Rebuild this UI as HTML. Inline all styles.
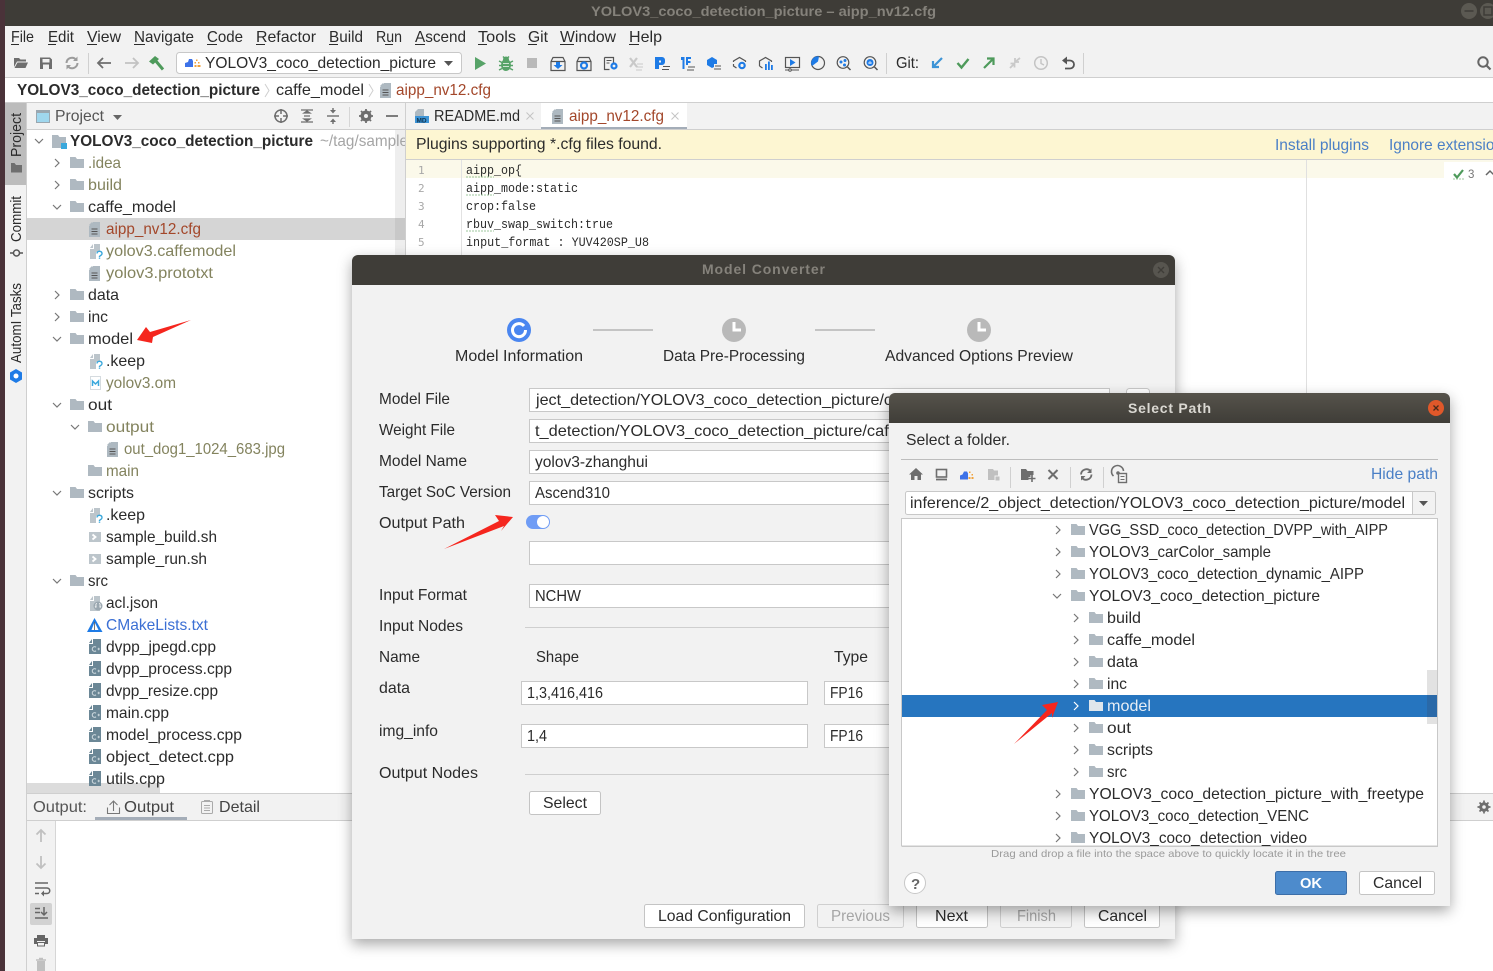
<!DOCTYPE html>
<html><head><meta charset="utf-8"><title>Model Converter</title>
<style>
html,body{margin:0;padding:0;background:#fff;width:1493px;height:971px;overflow:hidden}
svg{display:block;font-family:"Liberation Sans",sans-serif;font-size:16px;fill:#2b2b2b}
.m{font-family:"Liberation Mono",monospace;font-size:13px}
.o{fill:#83835e}.r{fill:#a3472a}.b{font-weight:bold}.g{fill:#a5a5a5}.l{fill:#4a7fc6}
.n{font-family:"DejaVu Sans Mono",monospace;font-size:11px;fill:#a8a8a8}
.ic{fill:none;stroke:#6e6e6e;stroke-width:1.6}
.bl{fill:#1e7be6}
</style></head><body>
<svg width="1493" height="971" viewBox="0 0 1493 971">
<defs>
<symbol id="f" viewBox="0 0 14 11" width="14" height="11"><path d="M0 0h5.500l1.500 2h7v9H0z" fill="#afb9c1"/></symbol>
<symbol id="d" viewBox="0 0 12 15" width="12" height="15"><path d="M4 0h7v15H0V4z" fill="#aeb9c1"/><path d="M3 0v3H0z" fill="#aeb9c1"/><path d="M2.500 7h6M2.500 9.500h6M2.500 12h6" stroke="#555" stroke-width="1"/></symbol>
<symbol id="c" viewBox="0 0 12 15" width="12" height="15"><path d="M4 0h8v15H0V5h4z" fill="#6b8796"/><path d="M3 0v4H0z" fill="#6b8796"/><path d="M7 8.200a2.300 2.300 0 1 0 0 3.600" fill="none" stroke="#d5dfe4" stroke-width="1"/><path d="M8.500 10h2.500M9.700 8.800v2.400" stroke="#d5dfe4" stroke-width=".8"/></symbol>
<symbol id="k" viewBox="0 0 14 15" width="14" height="15"><path d="M5 0h6v15H1V5h4z" fill="#bcc5cb"/><path d="M4 0v4H1z" fill="#bcc5cb"/></symbol>
<symbol id="q" viewBox="0 0 14 15" width="14" height="15"><path d="M5 0h6v15H1V5h4z" fill="#bcc5cb"/><path d="M4 0v4H1z" fill="#bcc5cb"/><path d="M7 8h7v7H7z" fill="#fff"/><path d="M8 9.500a2.500 2.200 0 1 1 3.500 2l-1 1v1" fill="none" stroke="#3aa8dc" stroke-width="1.400"/><circle cx="10.500" cy="15" r=".9" fill="#3aa8dc"/></symbol>
<symbol id="s" viewBox="0 0 12 10" width="12" height="10"><rect width="12" height="10" fill="#bcc5cb"/><path d="M3.500 2.500L6.500 5l-3 2.500" fill="none" stroke="#fff" stroke-width="1.800"/></symbol>
<symbol id="cr" viewBox="0 0 6 10" width="6" height="10"><path d="M1 1l4 4-4 4" fill="none" stroke="#777" stroke-width="1.200"/></symbol>
<symbol id="cd" viewBox="0 0 10 6" width="10" height="6"><path d="M1 1l4 4 4-4" fill="none" stroke="#777" stroke-width="1.200"/></symbol>
<filter id="sh" x="-8%" y="-8%" width="116%" height="116%"><feDropShadow dx="0" dy="5" stdDeviation="7" flood-color="#000" flood-opacity=".35"/></filter>
<linearGradient id="tb" x1="0" y1="0" x2="0" y2="1"><stop offset="0" stop-color="#56534b"/><stop offset="1" stop-color="#3f3d38"/></linearGradient>
</defs>

<!-- window frame -->
<rect width="1493" height="971" fill="#fff"/>
<rect width="5" height="971" fill="#4a3239"/>
<rect x="5" width="1488" height="26" fill="#3e3c37"/>
<text x="591" y="16" font-size="14" textLength="345" lengthAdjust="spacingAndGlyphs" class="b" style="fill:#85827b">YOLOV3_coco_detection_picture – aipp_nv12.cfg</text>
<circle cx="1469" cy="11" r="8" fill="#5b5952"/><path d="M1464.500 11h9" stroke="#3e3c37" stroke-width="1.500"/>
<circle cx="1488" cy="11" r="8" fill="#5b5952"/><rect x="1484" y="7" width="8" height="8" fill="none" stroke="#3e3c37" stroke-width="1.500"/>

<!-- menu -->
<rect x="5" y="26" width="1488" height="52" fill="#f2f2f2"/>
<g>
<text x="11" y="42" textLength="23" lengthAdjust="spacingAndGlyphs">File</text>
<text x="48" y="42" textLength="26" lengthAdjust="spacingAndGlyphs">Edit</text>
<text x="87" y="42" textLength="34" lengthAdjust="spacingAndGlyphs">View</text>
<text x="134" y="42" textLength="60" lengthAdjust="spacingAndGlyphs">Navigate</text>
<text x="207" y="42" textLength="36" lengthAdjust="spacingAndGlyphs">Code</text>
<text x="256" y="42" textLength="60" lengthAdjust="spacingAndGlyphs">Refactor</text>
<text x="329" y="42" textLength="34" lengthAdjust="spacingAndGlyphs">Build</text>
<text x="376" y="42" textLength="26" lengthAdjust="spacingAndGlyphs">Run</text>
<text x="415" y="42" textLength="51" lengthAdjust="spacingAndGlyphs">Ascend</text>
<text x="478" y="42" textLength="38" lengthAdjust="spacingAndGlyphs">Tools</text>
<text x="528" y="42" textLength="20" lengthAdjust="spacingAndGlyphs">Git</text>
<text x="560" y="42" textLength="56" lengthAdjust="spacingAndGlyphs">Window</text>
<text x="629" y="42" textLength="33" lengthAdjust="spacingAndGlyphs">Help</text>
</g>
<path d="M11 44.500h8M48 44.500h8M87 44.500h10M134 44.500h11M207 44.500h10M256 44.500h9M329 44.500h9M385 44.500h8M415 44.500h10M478 44.500h9M528 44.500h9M560 44.500h14M629 44.500h10" stroke="#2b2b2b" stroke-width="1"/>

<!-- toolbar -->
<path d="M14 58h5l1.500 1.500H26v2h-9l-3 5.500zM17.500 62.500H28l-2.500 5.500H14.500z" fill="#6e6e6e"/>
<path d="M40 57.500h10l2 2V69H40z" fill="#6e6e6e"/><rect x="42.500" y="59" width="7" height="3.500" fill="#f2f2f2"/><rect x="43" y="64.500" width="6" height="4.500" fill="#f2f2f2"/>
<path d="M66.500 63a5.500 5.500 0 0 1 9.500-3.500M77.500 63a5.500 5.500 0 0 1-9.500 3.500" fill="none" stroke="#9c9c9c" stroke-width="2"/><path d="M77.500 56.500v4.500H73zM66.500 69.500V65H71z" fill="#9c9c9c"/>
<path d="M88.500 53v21" stroke="#d0d0d0"/>
<path d="M98 63h13M103 58l-5 5 5 5" class="ic" style="stroke-width:1.800"/>
<path d="M125 63h13M133 58l5 5-5 5" class="ic" style="stroke:#c2c2c2;stroke-width:1.800"/>
<path d="M155 60l8 9.500" stroke="#4e9a5b" stroke-width="3"/><path d="M149 61.500l6-5.500 4 3-6 5.500z" fill="#4e9a5b"/>
<rect x="176.500" y="52.500" width="285" height="21" rx="3" fill="#fff" stroke="#c8c8c8"/>
<path d="M185 67v-4l3-1 1-3h3l1 2v6z" fill="#3d72e8"/><path d="M196 59.500h1.500V61H196zM194.500 62h1.500v1.500h-1.500zM198 62h1.500v1.500H198zM194.500 65h2v2h-2zM197.500 65h3v2h-3z" fill="#f0a23c"/>
<text x="205" y="68" textLength="231" lengthAdjust="spacingAndGlyphs">YOLOV3_coco_detection_picture</text>
<path d="M444 61h9l-4.500 5z" fill="#555"/>
<path d="M475 57l11 6.500-11 6.500z" fill="#57a368"/>
<ellipse cx="506" cy="65" rx="5" ry="6" fill="#57a368"/><circle cx="506" cy="59.500" r="3" fill="#57a368"/><path d="M499 61l3 1.500M513 61l-3 1.500M499 65.500h3M513 65.500h-3M499 70l3-1.500M513 70l-3-1.500M503 56.500l1.500 1.500M509 56.500l-1.500 1.500" stroke="#57a368" stroke-width="1.500"/><path d="M503 63.500h6M503 66.500h6" stroke="#cfe3d3" stroke-width="1"/>
<rect x="527" y="58" width="10" height="10" fill="#b9b9b9"/>
<path d="M553 57.500h10l2 4v9h-14v-9zM551 61.500h14" fill="none" stroke="#555" stroke-width="1.200"/><path d="M556 62h4v3h2.500l-4.500 4-4.500-4H556z" class="bl"/>
<path d="M579 57.500h10l2 4v9h-14v-9zM577 61.500h14" fill="none" stroke="#555" stroke-width="1.200"/><circle cx="584" cy="65.500" r="3" fill="none" stroke="#1e7be6" stroke-width="2.200"/>
<path d="M604.500 57.500h9v6M604.500 57.500v12h5" fill="none" stroke="#555" stroke-width="1.200"/><path d="M606.500 60.500h5M606.500 63h3" stroke="#555"/><circle cx="614" cy="66" r="2.500" fill="none" stroke="#1e7be6" stroke-width="2.200"/>
<path d="M630 58l7 9M637 58l-7 9" stroke="#c9c9c9" stroke-width="2.200"/><path d="M637 64h6M636 67h7M636 70h6" stroke="#c9c9c9"/>
<path d="M655 57h7a3 3 0 0 1 3 3v2a3 3 0 0 1-3 3h-3v4h-4z" class="bl"/><path d="M661 60.500h-2v2h2z" fill="#f2f2f2"/><path d="M663 66.500h7M662 69.500h7" stroke="#555" stroke-width="1.100"/>
<path d="M681 57h3.500v12h-2v-9h-1.500zM686 57h5v2h-3v2h2.500v2H688v2h-2z" class="bl"/><path d="M688 67h7M687 70h7" stroke="#555" stroke-width="1.100"/>
<path d="M707 60l5-3 5 3v4h-3v3l-2 1-5-3z" class="bl"/><path d="M715 66h6M714 69h7" stroke="#555" stroke-width="1.100"/>
<path d="M733.500 62v-1l6-3.500 6 3.500v1M733.500 64v2l3 2" fill="none" stroke="#555" stroke-width="1.200"/><circle cx="742" cy="65.500" r="2.700" fill="none" stroke="#1e7be6" stroke-width="2.200"/>
<path d="M759.500 66v-5l6-3.500 6 3.500v1M759.500 66l3 2" fill="none" stroke="#555" stroke-width="1.200"/><path d="M765 64h1.800v6H765zM768 61.500h1.800V70H768zM771 65h1.800v5H771z" class="bl"/>
<rect x="785.500" y="57.500" width="14" height="10" fill="none" stroke="#555" stroke-width="1.200"/><path d="M790 59l5.500 3.500-5.500 3.500z" class="bl"/><path d="M785 70h14" stroke="#555"/><circle cx="790" cy="70" r="1.300" fill="#f2f2f2" stroke="#555"/>
<circle cx="818" cy="63" r="6.500" fill="none" stroke="#555" stroke-width="1.200"/><path d="M812 66a6.500 6.500 0 0 1 7-9.500l-1 5z" class="bl"/>
<circle cx="843" cy="62.500" r="5.800" fill="none" stroke="#555" stroke-width="1.200"/><path d="M847.500 67l3 3" stroke="#555" stroke-width="1.500"/><circle cx="841" cy="62" r="1.500" class="bl"/><circle cx="845" cy="60.500" r="1.500" class="bl"/><circle cx="844.500" cy="65" r="1.500" class="bl"/>
<circle cx="870" cy="62.500" r="5.800" fill="none" stroke="#555" stroke-width="1.200"/><path d="M874.500 67l3 3" stroke="#555" stroke-width="1.500"/><circle cx="870" cy="62.500" r="3.500" class="bl"/><path d="M868 63h4M870 61v3" stroke="#fff" stroke-width=".7"/>
<path d="M886.500 53v21" stroke="#d0d0d0"/>
<text x="896" y="68" textLength="23" lengthAdjust="spacingAndGlyphs">Git:</text>
<path d="M942 58l-9 9M933 61v6h6" fill="none" stroke="#3d94d6" stroke-width="2.200"/>
<path d="M957.500 63l4 4.500 7-8.500" fill="none" stroke="#4e9a5b" stroke-width="2.400"/>
<path d="M984 68l9-9M987 58.500h6.500v6.500" fill="none" stroke="#4e9a5b" stroke-width="2.200"/>
<path d="M1010 68l4-4M1015 62l5-4M1010.500 63.500h4v4M1015 58v4h4" fill="none" stroke="#c9c9c9" stroke-width="1.800"/>
<circle cx="1041" cy="63" r="6.300" fill="none" stroke="#c4c4c4" stroke-width="1.500"/><path d="M1041 59v4.500l3 1.500" fill="none" stroke="#c4c4c4" stroke-width="1.400"/>
<path d="M1064 60.500h6a4 4 0 0 1 0 8h-5" fill="none" stroke="#555" stroke-width="1.800"/><path d="M1067 56.500v8l-5-4z" fill="#555"/>
<path d="M1083.500 53v21" stroke="#d0d0d0"/>
<circle cx="1483" cy="62" r="4.700" fill="none" stroke="#666" stroke-width="2"/><path d="M1486.500 65.500l4 4" stroke="#666" stroke-width="2.200"/>
<path d="M5 77.500h1488" stroke="#cfcfcf"/>

<!-- breadcrumb -->
<text x="17" y="95" textLength="243" lengthAdjust="spacingAndGlyphs" class="b">YOLOV3_coco_detection_picture</text>
<path d="M265 84l4 6.500-4 6.500" fill="none" stroke="#cfcfcf"/>
<text x="276" y="95" textLength="88" lengthAdjust="spacingAndGlyphs">caffe_model</text>
<path d="M369 84l4 6.500-4 6.500" fill="none" stroke="#cfcfcf"/>
<use href="#d" x="380" y="83"/>
<text x="396" y="95" textLength="95" lengthAdjust="spacingAndGlyphs" class="r">aipp_nv12.cfg</text>
<path d="M5 102.500h1488" stroke="#cfcfcf"/>

<!-- left strip -->
<rect x="5" y="103" width="21" height="868" fill="#f2f2f2"/>
<rect x="5" y="103" width="21" height="82" fill="#bcbcbc"/>
<path d="M26.500 103v868" stroke="#cfcfcf"/>
<text transform="translate(21,157) rotate(-90)" font-size="15" textLength="44" lengthAdjust="spacingAndGlyphs">Project</text>
<path d="M11 163v9.500h11V165h-6l-1.500-2z" fill="#6e6e6e"/>
<text transform="translate(21,242) rotate(-90)" font-size="15" textLength="46" lengthAdjust="spacingAndGlyphs">Commit</text>
<circle cx="16.500" cy="253" r="3" fill="none" stroke="#555" stroke-width="1.500"/><path d="M10 253h3M20 253h3" stroke="#555" stroke-width="1.500"/>
<text transform="translate(21,363) rotate(-90)" font-size="15" textLength="80" lengthAdjust="spacingAndGlyphs">AutomI Tasks</text>
<path d="M16 369l6 3.500v7l-6 3.500-6-3.500v-7z" fill="#1e7be6"/><circle cx="16" cy="376" r="2.500" fill="#fff"/>

<!-- project header -->
<rect x="27" y="103" width="378" height="26" fill="#f2f2f2"/>
<rect x="36.500" y="110.500" width="13" height="12" fill="#9fd7ee" stroke="#9aa7b0"/><path d="M36 111h14v2H36z" fill="#9aa7b0"/>
<text x="55" y="121" textLength="49" lengthAdjust="spacingAndGlyphs" style="fill:#555">Project</text>
<path d="M113 115h9l-4.500 5z" fill="#666"/>
<circle cx="281" cy="116" r="6" fill="none" stroke="#6e6e6e" stroke-width="1.500"/><path d="M281 109v5M281 118v5M274 116h5M283 116h5" stroke="#6e6e6e" stroke-width="1.500"/>
<path d="M301 110h12M301 122h12M304 116h6M304 113l3-2 3 2zM304 119l3 2 3-2z" fill="#6e6e6e" stroke="#6e6e6e" stroke-width="1.200"/>
<path d="M327 116h12" stroke="#6e6e6e" stroke-width="1.400"/><path d="M330 110h6l-3 3.500zM330 122h6l-3-3.500z" fill="#6e6e6e"/><path d="M333 108v3M333 124v-3" stroke="#6e6e6e" stroke-width="1.400"/>
<path d="M349.500 107v20" stroke="#d6d6d6"/>
<circle cx="366" cy="116" r="4" fill="none" stroke="#6e6e6e" stroke-width="3"/><path d="M366 109v14M359 116h14M361 111l10 10M371 111l-10 10" stroke="#6e6e6e" stroke-width="1.800"/><circle cx="366" cy="116" r="2" fill="#f2f2f2"/>
<path d="M386 116h12" stroke="#6e6e6e" stroke-width="1.800"/>
<path d="M27 129.500h378" stroke="#cfcfcf"/>
<path d="M405.500 103v690" stroke="#cfcfcf"/>

<!-- tree -->
<rect x="395" y="130" width="10" height="663" fill="#eeeeee"/>
<rect x="27" y="783" width="133" height="10" fill="#dcdcdc"/>
<rect x="27" y="218" width="368" height="22" fill="#d5d5d5"/><rect x="395" y="218" width="10" height="22" fill="#c8c8c8"/>
<use href="#cd" x="34" y="138"/>
<path d="M52 135h6l1.500 2H66v11H52z" fill="#afb9c1"/><rect x="61" y="143" width="6" height="6" fill="#3aa8dc"/>
<text x="70" y="146" textLength="243" lengthAdjust="spacingAndGlyphs" class="b">YOLOV3_coco_detection_picture</text>
<text x="320" y="146" textLength="88" lengthAdjust="spacingAndGlyphs" class="g">~/tag/sample</text>
<rect x="405" y="130" width="1" height="24" fill="#cfcfcf"/>

<use href="#cr" x="54" y="158"/><use href="#f" x="70" y="157"/><text x="88" y="168" textLength="33" lengthAdjust="spacingAndGlyphs" class="o">.idea</text>
<use href="#cr" x="54" y="180"/><use href="#f" x="70" y="179"/><text x="88" y="190" textLength="34" lengthAdjust="spacingAndGlyphs" class="o">build</text>
<use href="#cd" x="52" y="204"/><use href="#f" x="70" y="201"/><text x="88" y="212" textLength="88" lengthAdjust="spacingAndGlyphs">caffe_model</text>
<use href="#d" x="89" y="222"/><text x="106" y="234" textLength="95" lengthAdjust="spacingAndGlyphs" class="r">aipp_nv12.cfg</text>
<use href="#q" x="89" y="244"/><text x="106" y="256" textLength="130" lengthAdjust="spacingAndGlyphs" class="o">yolov3.caffemodel</text>
<use href="#d" x="89" y="266"/><text x="106" y="278" textLength="107" lengthAdjust="spacingAndGlyphs" class="o">yolov3.prototxt</text>
<use href="#cr" x="54" y="290"/><use href="#f" x="70" y="289"/><text x="88" y="300" textLength="31" lengthAdjust="spacingAndGlyphs">data</text>
<use href="#cr" x="54" y="312"/><use href="#f" x="70" y="311"/><text x="88" y="322" textLength="20" lengthAdjust="spacingAndGlyphs">inc</text>
<use href="#cd" x="52" y="336"/><use href="#f" x="70" y="333"/><text x="88" y="344" textLength="45" lengthAdjust="spacingAndGlyphs">model</text>
<use href="#q" x="89" y="354"/><text x="106" y="366" textLength="39" lengthAdjust="spacingAndGlyphs">.keep</text>
<rect x="90.500" y="376.500" width="10" height="13" fill="#fff" stroke="#d5dbdf"/><path d="M92.500 386v-5l3 3 3-3v5" fill="none" stroke="#3aa8dc" stroke-width="1.500"/><text x="106" y="388" textLength="70" lengthAdjust="spacingAndGlyphs" class="o">yolov3.om</text>
<use href="#cd" x="52" y="402"/><use href="#f" x="70" y="399"/><text x="88" y="410" textLength="24" lengthAdjust="spacingAndGlyphs">out</text>
<use href="#cd" x="70" y="424"/><use href="#f" x="88" y="421"/><text x="106" y="432" textLength="48" lengthAdjust="spacingAndGlyphs" class="o">output</text>
<use href="#d" x="107" y="442"/><text x="124" y="454" textLength="161" lengthAdjust="spacingAndGlyphs" class="o">out_dog1_1024_683.jpg</text>
<use href="#f" x="88" y="465"/><text x="106" y="476" textLength="33" lengthAdjust="spacingAndGlyphs" class="o">main</text>
<use href="#cd" x="52" y="490"/><use href="#f" x="70" y="487"/><text x="88" y="498" textLength="46" lengthAdjust="spacingAndGlyphs">scripts</text>
<use href="#q" x="89" y="508"/><text x="106" y="520" textLength="39" lengthAdjust="spacingAndGlyphs">.keep</text>
<use href="#s" x="89" y="532"/><text x="106" y="542" textLength="111" lengthAdjust="spacingAndGlyphs">sample_build.sh</text>
<use href="#s" x="89" y="554"/><text x="106" y="564" textLength="101" lengthAdjust="spacingAndGlyphs">sample_run.sh</text>
<use href="#cd" x="52" y="578"/><use href="#f" x="70" y="575"/><text x="88" y="586" textLength="20" lengthAdjust="spacingAndGlyphs">src</text>
<use href="#k" x="89" y="596"/><circle cx="98" cy="606" r="4.500" fill="#9aa7b0"/><path d="M97 603.500q-1.500 0-1 2.500t-1 .5M99 603.500q1.500 0 1 2.500t1 .5" fill="none" stroke="#fff" stroke-width=".8"/><text x="106" y="608" textLength="52" lengthAdjust="spacingAndGlyphs">acl.json</text>
<path d="M94.500 618l8 14H87z" fill="#1e7be6"/><path d="M94.500 622l4 8h-7z" fill="#fff"/><path d="M94.500 622v8" stroke="#555" stroke-width=".8"/><text x="106" y="630" textLength="102" lengthAdjust="spacingAndGlyphs" style="fill:#3b6fd4">CMakeLists.txt</text>
<use href="#c" x="89" y="639"/><text x="106" y="652" textLength="110" lengthAdjust="spacingAndGlyphs">dvpp_jpegd.cpp</text>
<use href="#c" x="89" y="661"/><text x="106" y="674" textLength="126" lengthAdjust="spacingAndGlyphs">dvpp_process.cpp</text>
<use href="#c" x="89" y="683"/><text x="106" y="696" textLength="112" lengthAdjust="spacingAndGlyphs">dvpp_resize.cpp</text>
<use href="#c" x="89" y="705"/><text x="106" y="718" textLength="63" lengthAdjust="spacingAndGlyphs">main.cpp</text>
<use href="#c" x="89" y="727"/><text x="106" y="740" textLength="136" lengthAdjust="spacingAndGlyphs">model_process.cpp</text>
<use href="#c" x="89" y="749"/><text x="106" y="762" textLength="128" lengthAdjust="spacingAndGlyphs">object_detect.cpp</text>
<use href="#c" x="89" y="771"/><text x="106" y="784" textLength="59" lengthAdjust="spacingAndGlyphs">utils.cpp</text>

<!-- editor tabs -->
<rect x="406" y="103" width="1087" height="26" fill="#f2f2f2"/>
<path d="M418 109h6v7h-9v-4z" fill="#aeb9c1"/><rect x="415" y="116" width="14" height="7" fill="#3d94d6"/><text x="416.500" y="122.500" font-size="6.500" class="b" style="fill:#12354f">MD</text>
<text x="434" y="121" textLength="86" lengthAdjust="spacingAndGlyphs">README.md</text>
<path d="M526.500 112.500l7 7M533.500 112.500l-7 7" stroke="#c4c4c4"/>
<rect x="541" y="103" width="146" height="24" fill="#fff"/><rect x="541" y="127" width="146" height="2" fill="#a4adb8"/>
<use href="#d" x="552" y="109"/>
<text x="569" y="121" textLength="95" lengthAdjust="spacingAndGlyphs" class="r">aipp_nv12.cfg</text>
<path d="M671.500 112.500l7 7M678.500 112.500l-7 7" stroke="#c4c4c4"/>
<path d="M406 129.500h1087" stroke="#cfcfcf"/>
<rect x="406" y="130" width="1087" height="29" fill="#fdf6d2"/>
<text x="416" y="149" textLength="246" lengthAdjust="spacingAndGlyphs">Plugins supporting *.cfg files found.</text>
<text x="1275" y="150" textLength="94" lengthAdjust="spacingAndGlyphs" class="l">Install plugins</text>
<text x="1389" y="150" textLength="114" lengthAdjust="spacingAndGlyphs" class="l">Ignore extension</text>
<path d="M406 159.500h1087" stroke="#cfcfcf"/>

<!-- editor -->
<rect x="406" y="160" width="1087" height="18" fill="#fbf9ea"/>
<rect x="1444" y="162" width="49" height="16" fill="#fff"/>
<path d="M461.500 160v95" stroke="#e2e2e2"/>
<path d="M1306.500 160v233" stroke="#e0e0e0"/>
<text x="418" y="174" class="n">1</text><text x="418" y="192" class="n">2</text><text x="418" y="210" class="n">3</text><text x="418" y="228" class="n">4</text><text x="418" y="246" class="n">5</text>
<text x="466" y="174" class="m" textLength="56" lengthAdjust="spacingAndGlyphs">aipp_op{</text>
<text x="466" y="192" class="m" textLength="112" lengthAdjust="spacingAndGlyphs">aipp_mode:static</text>
<text x="466" y="210" class="m" textLength="70" lengthAdjust="spacingAndGlyphs">crop:false</text>
<text x="466" y="228" class="m" textLength="147" lengthAdjust="spacingAndGlyphs">rbuv_swap_switch:true</text>
<text x="466" y="246" class="m" textLength="183" lengthAdjust="spacingAndGlyphs">input_format : YUV420SP_U8</text>
<path d="M466 177h28M466 195h28M466 231h28" stroke="#9cc79c" stroke-width="1" stroke-dasharray="2 1"/>
<path d="M1454 174l3 3.500 6-7.500" fill="none" stroke="#4e9a5b" stroke-width="2.200"/><path d="M1453 179h11" stroke="#9cc79c" stroke-dasharray="2 1"/>
<text x="1468" y="178" font-size="11.500" style="fill:#777">3</text>
<path d="M1486 175l4-4 4 4" fill="none" stroke="#666" stroke-width="1.500"/>

<!-- bottom panel -->
<rect x="27" y="793" width="1466" height="178" fill="#fff"/>
<rect x="27" y="794" width="1466" height="26" fill="#f2f2f2"/>
<path d="M27 793.500h1466M27 820.500h1466" stroke="#cfcfcf"/>
<text x="33" y="812" textLength="54" lengthAdjust="spacingAndGlyphs" style="fill:#555">Output:</text>
<path d="M107.500 807.500v6h12v-6M113.500 811v-10M109.500 805l4-4 4 4" fill="none" stroke="#777" stroke-width="1.100"/>
<text x="124" y="812" textLength="50" lengthAdjust="spacingAndGlyphs" style="fill:#444">Output</text>
<rect x="95" y="817" width="92" height="3" fill="#a4adb8"/>
<rect x="201.500" y="801.500" width="11" height="12" rx="1" fill="none" stroke="#aaa"/><path d="M204 800.500h6M204 805.500h6M204 808h6M204 810.500h6" stroke="#aaa"/>
<text x="219" y="812" textLength="41" lengthAdjust="spacingAndGlyphs" style="fill:#444">Detail</text>
<rect x="27" y="821" width="28" height="150" fill="#f2f2f2"/><path d="M55.500 821v150" stroke="#d6d6d6"/>
<path d="M41 842v-12M36.500 834.500l4.500-4.500 4.500 4.500" fill="none" stroke="#c0c0c0" stroke-width="1.800"/>
<path d="M41 856v12M36.500 863.500l4.500 4.500 4.500-4.500" fill="none" stroke="#c0c0c0" stroke-width="1.800"/>
<path d="M35 883h13M35 888h12a2.500 2.500 0 0 1 0 5.500h-4M35 893.500h4" fill="none" stroke="#666" stroke-width="1.500"/><path d="M44 890.500v6l-3-3z" fill="#666"/>
<rect x="30" y="903" width="22" height="22" rx="2" fill="#d2d2d2"/>
<path d="M35 908.500h5M35 912.500h5M35 918h13M44 907v8M41 912l3 3 3-3" fill="none" stroke="#666" stroke-width="1.500"/>
<path d="M37 935h8v3h-8zM34 938h14v6h-3v-3h-8v3h-3z" fill="#666"/><rect x="37.500" y="942.500" width="7" height="3.500" fill="none" stroke="#666"/>
<path d="M36 960h10M39 958.500h4" stroke="#c0c0c0" stroke-width="1.500"/><rect x="37" y="961" width="8" height="10" fill="#c0c0c0"/>
<circle cx="1484" cy="807" r="3.500" fill="none" stroke="#6e6e6e" stroke-width="2.600"/><path d="M1484 800.500v13M1477.500 807h13M1479.500 802.500l9 9M1488.500 802.500l-9 9" stroke="#6e6e6e" stroke-width="1.700"/><circle cx="1484" cy="807" r="1.800" fill="#f2f2f2"/>

<!-- Model Converter dialog -->
<g filter="url(#sh)"><path d="M358 255h811a6 6 0 0 1 6 6v678H352V261a6 6 0 0 1 6-6z" fill="#f2f2f2"/></g>
<path d="M358 255h811a6 6 0 0 1 6 6v24H352v-24a6 6 0 0 1 6-6z" fill="#3f3d38"/>
<text x="702" y="274" font-size="14" textLength="123" lengthAdjust="spacing" class="b" style="fill:#85827b">Model Converter</text>
<circle cx="1161" cy="270" r="8" fill="#57554f"/><path d="M1158 267l6 6M1164 267l-6 6" stroke="#3f3d38" stroke-width="1.400"/>

<circle cx="519" cy="330" r="12" fill="#4a86f0"/><path d="M524 326a6.500 6.500 0 1 0 1.500 4" fill="none" stroke="#fff" stroke-width="3"/>
<text x="455" y="361" textLength="128" lengthAdjust="spacingAndGlyphs">Model Information</text>
<path d="M593 330h60M815 330h60" stroke="#c4c4c4" stroke-width="2"/>
<circle cx="734" cy="330" r="12" fill="#b9b9b9"/><path d="M734 322v8h7" fill="none" stroke="#fff" stroke-width="3"/>
<text x="663" y="361" textLength="142" lengthAdjust="spacingAndGlyphs">Data Pre-Processing</text>
<circle cx="979" cy="330" r="12" fill="#b9b9b9"/><path d="M979 322v8h7" fill="none" stroke="#fff" stroke-width="3"/>
<text x="885" y="361" textLength="188" lengthAdjust="spacingAndGlyphs">Advanced Options  Preview</text>

<text x="379" y="404" textLength="71" lengthAdjust="spacingAndGlyphs">Model File</text>
<text x="379" y="435" textLength="76" lengthAdjust="spacingAndGlyphs">Weight File</text>
<text x="379" y="466" textLength="88" lengthAdjust="spacingAndGlyphs">Model Name</text>
<text x="379" y="497" textLength="132" lengthAdjust="spacingAndGlyphs">Target SoC Version</text>
<text x="379" y="528" textLength="86" lengthAdjust="spacingAndGlyphs">Output Path</text>
<g fill="#fff" stroke="#c8c8c8">
<rect x="529.500" y="388.500" width="580" height="23"/>
<rect x="529.500" y="419.500" width="580" height="23"/>
<rect x="529.500" y="450.500" width="580" height="23"/>
<rect x="529.500" y="481.500" width="580" height="23"/>
<rect x="529.500" y="541.500" width="580" height="23"/>
<rect x="529.500" y="584.500" width="580" height="23"/>
<rect x="521.500" y="681.500" width="286" height="23"/>
<rect x="521.500" y="724.500" width="286" height="23"/>
<rect x="824.500" y="681.500" width="100" height="23"/>
<rect x="824.500" y="724.500" width="100" height="23"/>
<rect x="1126.500" y="388.500" width="23" height="23" rx="3"/>
</g>
<text x="536" y="405" textLength="356" lengthAdjust="spacingAndGlyphs">ject_detection/YOLOV3_coco_detection_picture/c</text>
<text x="535" y="436" textLength="358" lengthAdjust="spacingAndGlyphs">t_detection/YOLOV3_coco_detection_picture/caff</text>
<text x="535" y="467" textLength="113" lengthAdjust="spacingAndGlyphs">yolov3-zhanghui</text>
<text x="535" y="498" textLength="75" lengthAdjust="spacingAndGlyphs">Ascend310</text>
<rect x="526" y="515" width="24" height="14" rx="7" fill="#6f9cf5"/><circle cx="543" cy="522" r="6" fill="#fff"/>
<text x="379" y="600" textLength="88" lengthAdjust="spacingAndGlyphs">Input Format</text>
<text x="535" y="601" textLength="46" lengthAdjust="spacingAndGlyphs">NCHW</text>
<text x="379" y="631" textLength="84" lengthAdjust="spacingAndGlyphs">Input Nodes</text>
<path d="M525 627.500h400" stroke="#cfcfcf"/>
<text x="379" y="662" textLength="41" lengthAdjust="spacingAndGlyphs">Name</text>
<text x="536" y="662" textLength="43" lengthAdjust="spacingAndGlyphs">Shape</text>
<text x="834" y="662" textLength="34" lengthAdjust="spacingAndGlyphs">Type</text>
<text x="379" y="693" textLength="31" lengthAdjust="spacingAndGlyphs">data</text>
<text x="527" y="698" textLength="76" lengthAdjust="spacingAndGlyphs">1,3,416,416</text>
<text x="830" y="698" textLength="33" lengthAdjust="spacingAndGlyphs">FP16</text>
<text x="379" y="736" textLength="59" lengthAdjust="spacingAndGlyphs">img_info</text>
<text x="527" y="741" textLength="20" lengthAdjust="spacingAndGlyphs">1,4</text>
<text x="830" y="741" textLength="33" lengthAdjust="spacingAndGlyphs">FP16</text>
<text x="379" y="778" textLength="99" lengthAdjust="spacingAndGlyphs">Output Nodes</text>
<path d="M525 774.500h400" stroke="#cfcfcf"/>
<rect x="529.500" y="791.500" width="71" height="23" rx="2" fill="#fff" stroke="#c4c4c4"/>
<text x="543" y="808" textLength="44" lengthAdjust="spacingAndGlyphs">Select</text>
<rect x="644.500" y="904.500" width="160" height="23" rx="2" fill="#fff" stroke="#c4c4c4"/>
<text x="658" y="921" textLength="133" lengthAdjust="spacingAndGlyphs">Load Configuration</text>
<rect x="817.500" y="904.500" width="86" height="23" rx="2" fill="#f2f2f2" stroke="#cfcfcf"/>
<text x="831" y="921" textLength="59" lengthAdjust="spacingAndGlyphs" class="g">Previous</text>
<rect x="916.500" y="904.500" width="71" height="23" rx="2" fill="#fff" stroke="#c4c4c4"/>
<text x="935" y="921" textLength="33" lengthAdjust="spacingAndGlyphs">Next</text>
<rect x="1000.500" y="904.500" width="71" height="23" rx="2" fill="#f2f2f2" stroke="#cfcfcf"/>
<text x="1017" y="921" textLength="39" lengthAdjust="spacingAndGlyphs" class="g">Finish</text>
<rect x="1084.500" y="904.500" width="75" height="23" rx="2" fill="#fff" stroke="#c4c4c4"/>
<text x="1098" y="921" textLength="49" lengthAdjust="spacingAndGlyphs">Cancel</text>

<!-- Select Path dialog -->
<g filter="url(#sh)"><path d="M895 393h549a6 6 0 0 1 6 6v507H889V399a6 6 0 0 1 6-6z" fill="#f2f2f2"/></g>
<path d="M895 393h549a6 6 0 0 1 6 6v24H889v-24a6 6 0 0 1 6-6z" fill="url(#tb)"/>
<text x="1128" y="413" font-size="14" textLength="83" lengthAdjust="spacing" class="b" style="fill:#dad8d2">Select Path</text>
<circle cx="1436" cy="408" r="8" fill="#e0582a"/><path d="M1433.500 405.500l5 5M1438.500 405.500l-5 5" stroke="#4a2a1a" stroke-width="1.300"/>
<text x="906" y="445" textLength="104" lengthAdjust="spacingAndGlyphs">Select a folder.</text>
<path d="M901 459.500h537" stroke="#bdbdbd"/>
<path d="M916 468l7 6.500h-2V480h-3.500v-4h-3v4H911v-5.500h-2z" fill="#6e6e6e"/>
<rect x="936.500" y="469.500" width="10" height="7.500" fill="none" stroke="#6e6e6e" stroke-width="1.600"/><path d="M936 479.500h11" stroke="#6e6e6e" stroke-width="1.800"/>
<path d="M960 479.500v-4l2.500-1 1.500-3h3l1 2v6z" fill="#3d72e8"/><path d="M969 471.500h1.500v1.500H969zM971.500 474h1.500v1.500h-1.500zM968.500 477h2v2h-2zM971.500 477h2v2h-2z" fill="#f0a23c"/>
<path d="M988 469h5l1 1.500h4V480h-10z" fill="#c0c0c0"/><rect x="995" y="476" width="5" height="5" fill="#c0c0c0" stroke="#f2f2f2"/>
<path d="M1010.500 467v21" stroke="#d0d0d0"/>
<path d="M1021 469h5l1.500 2h6v9h-12.500z" fill="#6e6e6e"/><path d="M1032 475v7M1028.500 478.500h7" stroke="#f2f2f2" stroke-width="3"/><path d="M1032 475v7M1028.500 478.500h7" stroke="#6e6e6e" stroke-width="1.600"/>
<path d="M1048.500 470l9 9M1057.500 470l-9 9" stroke="#6e6e6e" stroke-width="2"/>
<path d="M1070.500 467v21" stroke="#d0d0d0"/>
<path d="M1081 474.500a5.500 5.500 0 0 1 9.500-3.500M1091.500 474.500a5.500 5.500 0 0 1-9.500 3.500" fill="none" stroke="#6e6e6e" stroke-width="1.800"/><path d="M1091.500 468.500v4.500H1087zM1081 480.500V476h4.500z" fill="#6e6e6e"/>
<path d="M1103.500 467v21" stroke="#d0d0d0"/>
<path d="M1113.500 476a6 6 0 1 1 10-5" fill="none" stroke="#6e6e6e" stroke-width="1.600"/><circle cx="1118" cy="473" r="1.800" fill="#6e6e6e"/><rect x="1118.500" y="473.500" width="8" height="9" fill="#f2f2f2" stroke="#6e6e6e" stroke-width="1.400"/><path d="M1120.500 476.500h4M1120.500 479.500h4" stroke="#6e6e6e"/>
<text x="1371" y="479" textLength="67" lengthAdjust="spacingAndGlyphs" class="l">Hide path</text>
<rect x="905.500" y="491.500" width="530" height="23" rx="2" fill="#fff" stroke="#c8c8c8"/>
<rect x="1412" y="492" width="23" height="22" rx="2" fill="#f2f2f2"/><path d="M1412.500 492v22" stroke="#c8c8c8"/>
<path d="M1419 501h9l-4.500 5z" fill="#555"/>
<text x="910" y="508" textLength="495" lengthAdjust="spacingAndGlyphs">inference/2_object_detection/YOLOV3_coco_detection_picture/model</text>

<rect x="901.500" y="518.500" width="536" height="327.500" fill="#fff" stroke="#c8c8c8"/>
<rect x="1427" y="670" width="10" height="54" fill="#e2e2e2"/>
<rect x="902" y="695" width="535" height="22" fill="#2675bf"/><rect x="1427" y="695" width="10" height="22" fill="#2a69a8"/>

<use href="#cr" x="1055" y="525"/><use href="#f" x="1071" y="524"/><text x="1089" y="535" textLength="299" lengthAdjust="spacingAndGlyphs">VGG_SSD_coco_detection_DVPP_with_AIPP</text>
<use href="#cr" x="1055" y="547"/><use href="#f" x="1071" y="546"/><text x="1089" y="557" textLength="182" lengthAdjust="spacingAndGlyphs">YOLOV3_carColor_sample</text>
<use href="#cr" x="1055" y="569"/><use href="#f" x="1071" y="568"/><text x="1089" y="579" textLength="275" lengthAdjust="spacingAndGlyphs">YOLOV3_coco_detection_dynamic_AIPP</text>
<use href="#cd" x="1052" y="593"/><use href="#f" x="1071" y="590"/><text x="1089" y="601" textLength="231" lengthAdjust="spacingAndGlyphs">YOLOV3_coco_detection_picture</text>
<use href="#cr" x="1073" y="613"/><use href="#f" x="1089" y="612"/><text x="1107" y="623" textLength="34" lengthAdjust="spacingAndGlyphs">build</text>
<use href="#cr" x="1073" y="635"/><use href="#f" x="1089" y="634"/><text x="1107" y="645" textLength="88" lengthAdjust="spacingAndGlyphs">caffe_model</text>
<use href="#cr" x="1073" y="657"/><use href="#f" x="1089" y="656"/><text x="1107" y="667" textLength="31" lengthAdjust="spacingAndGlyphs">data</text>
<use href="#cr" x="1073" y="679"/><use href="#f" x="1089" y="678"/><text x="1107" y="689" textLength="20" lengthAdjust="spacingAndGlyphs">inc</text>
<path d="M1074 702l4 4-4 4" fill="none" stroke="#fff" stroke-width="1.200"/><path d="M1089 700h5.500l1.500 2h7v9h-14z" fill="#dfe6ec"/><text x="1107" y="711" textLength="44" lengthAdjust="spacingAndGlyphs" style="fill:#e6edf5">model</text>
<use href="#cr" x="1073" y="723"/><use href="#f" x="1089" y="722"/><text x="1107" y="733" textLength="24" lengthAdjust="spacingAndGlyphs">out</text>
<use href="#cr" x="1073" y="745"/><use href="#f" x="1089" y="744"/><text x="1107" y="755" textLength="46" lengthAdjust="spacingAndGlyphs">scripts</text>
<use href="#cr" x="1073" y="767"/><use href="#f" x="1089" y="766"/><text x="1107" y="777" textLength="20" lengthAdjust="spacingAndGlyphs">src</text>
<use href="#cr" x="1055" y="789"/><use href="#f" x="1071" y="788"/><text x="1089" y="799" textLength="335" lengthAdjust="spacingAndGlyphs">YOLOV3_coco_detection_picture_with_freetype</text>
<use href="#cr" x="1055" y="811"/><use href="#f" x="1071" y="810"/><text x="1089" y="821" textLength="220" lengthAdjust="spacingAndGlyphs">YOLOV3_coco_detection_VENC</text>
<use href="#cr" x="1055" y="833"/><use href="#f" x="1071" y="832"/><text x="1089" y="843" textLength="218" lengthAdjust="spacingAndGlyphs">YOLOV3_coco_detection_video</text>
<rect x="902" y="846" width="535" height="3" fill="#f2f2f2"/><path d="M902 846.500h536" stroke="#c8c8c8"/>
<text x="991" y="857" font-size="10.500" textLength="355" lengthAdjust="spacingAndGlyphs" style="fill:#9a9a9a">Drag and drop a file into the space above to quickly locate it in the tree</text>
<circle cx="915" cy="883" r="10.500" fill="#fff" stroke="#c8c8c8"/><text x="911" y="889" font-size="15" class="b" style="fill:#666">?</text>
<rect x="1275.500" y="871.500" width="71" height="23" rx="2" fill="#4d8bcc" stroke="#3c6ea8"/>
<text x="1300" y="888" font-size="14.500" textLength="22" lengthAdjust="spacingAndGlyphs" class="b" style="fill:#fff">OK</text>
<rect x="1359.500" y="871.500" width="75" height="23" rx="2" fill="#fff" stroke="#c4c4c4"/>
<text x="1373" y="888" textLength="49" lengthAdjust="spacingAndGlyphs">Cancel</text>

<!-- red arrows -->
<path d="M137 340L146 327l4 5 41-12-38 17-1 6z" fill="#f5261e"/>
<path d="M513 517L495 515l4 6-55 28 60-23-3 5z" fill="#f5261e"/>
<path d="M1058 702l-16 3 5 5-33 34 38-31 0 5z" fill="#f5261e"/>
</svg>
</body></html>
